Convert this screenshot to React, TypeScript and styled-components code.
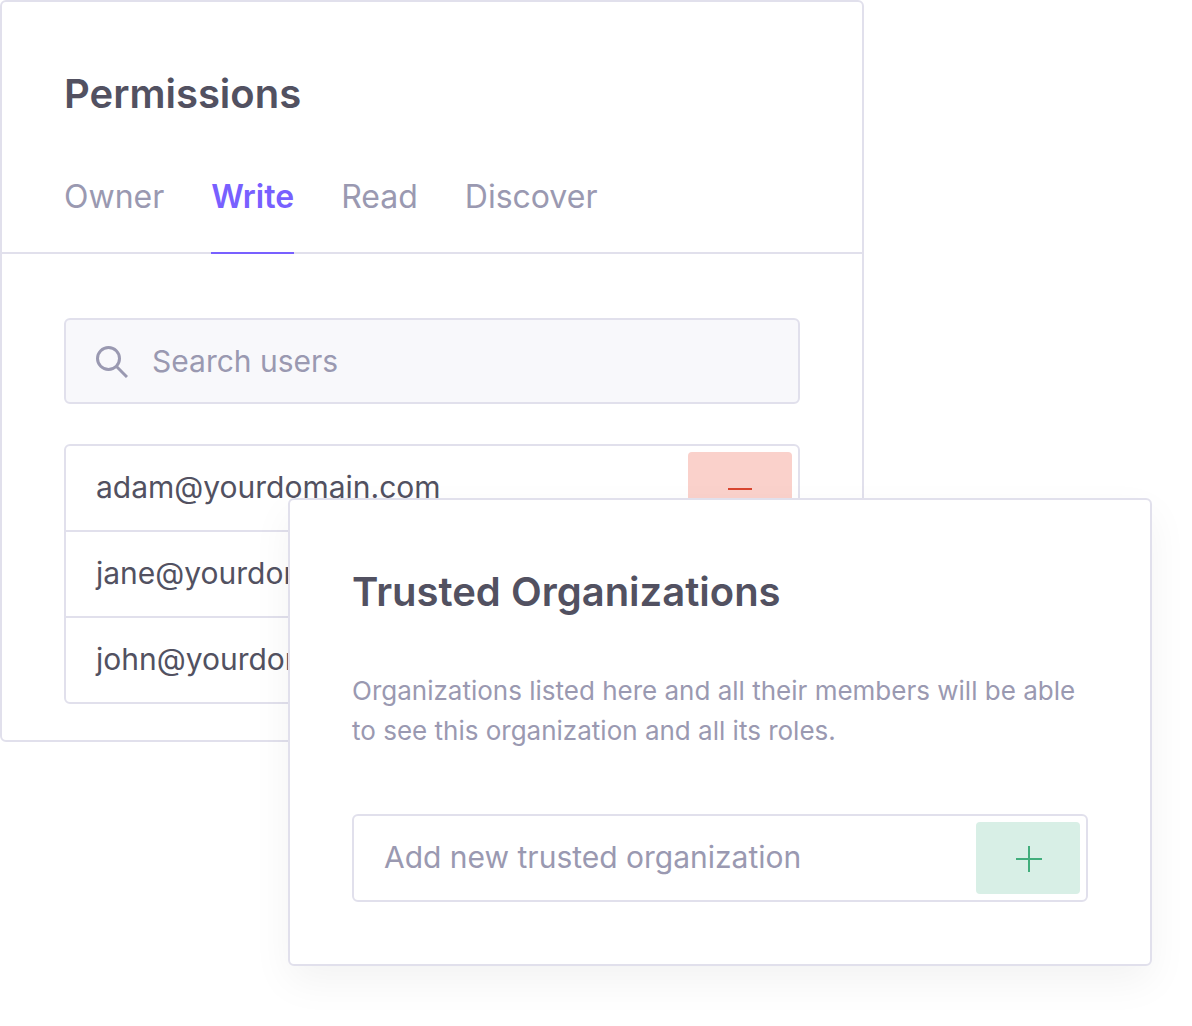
import React from "react";
import styled, { createGlobalStyle, css } from "styled-components";

const color = {
  text: "#525161",
  muted: "#9a99b1",
  border: "#e1e0ec",
  accent: "#7860ff",
  field: "#f8f8fb",
  removeBg: "#fad1cb",
  removeFg: "#d94630",
  addBg: "#d8efe6",
  addFg: "#41ae7c",
};

const GlobalStyle = createGlobalStyle`
  *, *::before, *::after { box-sizing: border-box; }
  body {
    margin: 0;
    background: #fff;
    color: ${color.text};
    font-family: Inter, "Liberation Sans", sans-serif;
  }
`;

const Stage = styled.main`
  display: grid;
  grid-template-columns: minmax(0, 1fr) minmax(0, 2fr) minmax(0, 1fr);
  align-items: start;
  min-height: 100vh;
  padding: 0 40px 60px 0;
`;

const Panel = styled.section<{ $raised?: boolean }>`
  grid-row: 1;
  grid-column: ${(p) => (p.$raised ? "2 / 4" : "1 / 3")};
  background: #fff;
  border: 2px solid ${color.border};
  border-radius: 6px;
  ${(p) =>
    p.$raised &&
    css`
      z-index: 1;
      margin-top: 498px;
      box-shadow: 0 16px 40px rgba(0, 0, 0, 0.05);
    `}
`;

const PanelHeader = styled.header`
  padding: 68px 62px 0;
  border-bottom: 2px solid ${color.border};
`;

const PanelBody = styled.div`
  display: flex;
  flex-direction: column;
  gap: 40px;
  padding: 64px 62px 36px;
`;

const RaisedBody = styled.div`
  padding: 68px 62px 62px;
`;

const Title = styled.h2`
  margin: 0;
  font-size: 40px;
  font-weight: 600;
  line-height: 48px;
`;

const Tabs = styled.div`
  display: flex;
  gap: 47px;
  margin-top: 40px;
`;

const Tab = styled.button<{ $active?: boolean }>`
  margin: 0 0 -2px;
  padding: 19px 0 35px;
  border: 0;
  border-bottom: 2px solid ${(p) => (p.$active ? color.accent : "transparent")};
  background: none;
  color: ${(p) => (p.$active ? color.accent : color.muted)};
  font: ${(p) => (p.$active ? 600 : 400)} 32px / 40px Inter, "Liberation Sans", sans-serif;
  cursor: pointer;
`;

const Field = styled.div<{ $filled?: boolean }>`
  display: flex;
  align-items: center;
  gap: 24px;
  min-width: 0;
  padding: ${(p) => (p.$filled ? "22px 30px 20px" : "6px 6px 6px 30px")};
  border: 2px solid ${color.border};
  border-radius: 6px;
  background: ${(p) => (p.$filled ? color.field : "#fff")};
`;

const FieldIcon = styled.label`
  display: flex;
  flex: none;
`;

const TextInput = styled.input`
  flex: 1;
  min-width: 0;
  height: 40px;
  padding: 0 0 2px;
  border: 0;
  outline: 0;
  background: none;
  color: ${color.text};
  font: 400 30px / 38px Inter, "Liberation Sans", sans-serif;

  &::placeholder {
    color: ${color.muted};
    opacity: 1;
  }
`;

const UserList = styled.ul`
  margin: 0;
  padding: 0;
  list-style: none;
  border: 2px solid ${color.border};
  border-radius: 6px;
`;

const UserRow = styled.li`
  display: flex;
  align-items: center;
  justify-content: space-between;
  padding: 6px 6px 6px 30px;

  & + & {
    border-top: 2px solid ${color.border};
  }
`;

const UserEmail = styled.span`
  padding-bottom: 2px;
  font-size: 30px;
  line-height: 38px;
`;

const ActionButton = styled.button<{ $tone: "add" | "remove" }>`
  display: flex;
  flex: none;
  align-items: center;
  justify-content: center;
  width: 104px;
  height: 72px;
  padding: 0;
  border: 0;
  border-radius: 4px;
  background: ${(p) => (p.$tone === "add" ? color.addBg : color.removeBg)};
  color: ${(p) => (p.$tone === "add" ? color.addFg : color.removeFg)};
  cursor: pointer;
`;

const Description = styled.p`
  margin: 55px 0 63px;
  color: ${color.muted};
  font-size: 26px;
  line-height: 40px;
`;

const SearchIcon = () => (
  <svg width="32" height="32" viewBox="0 0 32 32" fill="none" stroke={color.muted} strokeWidth="3" aria-hidden="true">
    <circle cx="12.5" cy="12.5" r="11" />
    <path d="M20.5 20.5 31 31" />
  </svg>
);

const MinusIcon = () => (
  <svg width="28" height="28" viewBox="0 0 28 28" fill="none" stroke="currentColor" strokeWidth="2" aria-hidden="true">
    <path d="M2 15h24" />
  </svg>
);

const PlusIcon = () => (
  <svg width="28" height="28" viewBox="0 0 28 28" fill="none" stroke="currentColor" strokeWidth="2" aria-hidden="true">
    <path d="M2 15h26M15 2v26" />
  </svg>
);

const tabs = ["Owner", "Write", "Read", "Discover"];
const users = ["adam@yourdomain.com", "jane@yourdomain.com", "john@yourdomain.com"];

export default function App() {
  const [active, setActive] = React.useState("Write");

  return (
    <>
      <GlobalStyle />
      <Stage>
        <Panel>
          <PanelHeader>
            <Title>Permissions</Title>
            <Tabs role="tablist">
              {tabs.map((tab) => (
                <Tab
                  key={tab}
                  type="button"
                  role="tab"
                  aria-selected={tab === active}
                  $active={tab === active}
                  onClick={() => setActive(tab)}
                >
                  {tab}
                </Tab>
              ))}
            </Tabs>
          </PanelHeader>
          <PanelBody>
            <Field $filled>
              <FieldIcon htmlFor="user-search">
                <SearchIcon />
              </FieldIcon>
              <TextInput id="user-search" type="search" placeholder="Search users" aria-label="Search users" />
            </Field>
            <UserList>
              {users.map((user) => (
                <UserRow key={user}>
                  <UserEmail>{user}</UserEmail>
                  <ActionButton type="button" $tone="remove" aria-label={`Remove ${user}`}>
                    <MinusIcon />
                  </ActionButton>
                </UserRow>
              ))}
            </UserList>
          </PanelBody>
        </Panel>

        <Panel $raised>
          <RaisedBody>
            <Title>Trusted Organizations</Title>
            <Description>
              Organizations listed here and all their members will be able to see this organization and all its roles.
            </Description>
            <Field>
              <TextInput
                type="text"
                placeholder="Add new trusted organization"
                aria-label="Add new trusted organization"
              />
              <ActionButton type="button" $tone="add" aria-label="Add organization">
                <PlusIcon />
              </ActionButton>
            </Field>
          </RaisedBody>
        </Panel>
      </Stage>
    </>
  );
}
